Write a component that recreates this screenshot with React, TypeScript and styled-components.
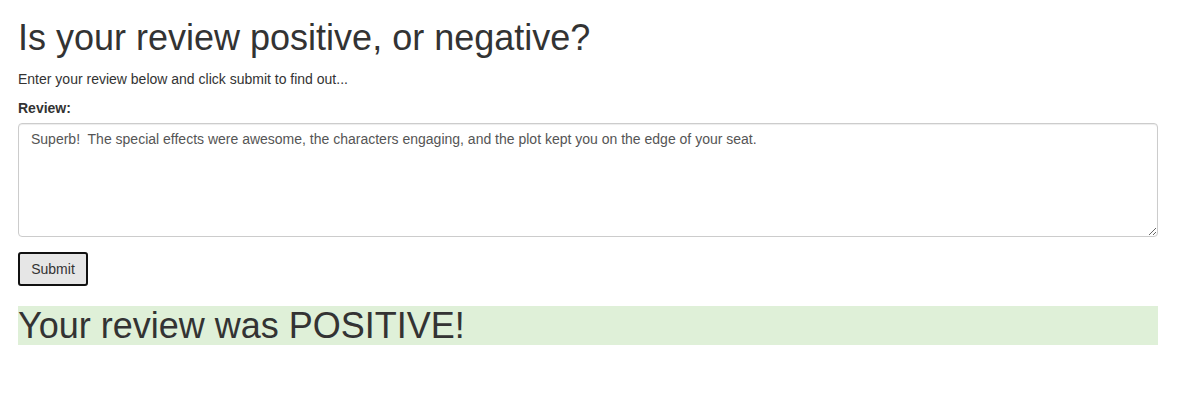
import React from "react";
import styled, { createGlobalStyle } from "styled-components";

const Global = createGlobalStyle`
  html, body { margin: 0; padding: 0; background: #fff; }
  body {
    font-family: "Liberation Sans", Arial, Helvetica, sans-serif;
    font-size: 14px;
    line-height: 1.42857;
    color: #333;
  }
  * { box-sizing: border-box; }
`;

const Container = styled.div`
  width: 1158px;
  padding-left: 18px;
  padding-top: 18px;
`;

const Title = styled.h1`
  margin: 0 0 12px;
  font-size: 36px;
  font-weight: 400;
  line-height: 1.1;
`;

const Lead = styled.p`
  margin: 0 0 9px;
  font-size: 14px;
`;

const FormGroup = styled.div`
  display: flex;
  flex-direction: column;
  margin-bottom: 15px;
`;

const Label = styled.label`
  font-weight: 700;
  margin-bottom: 4px;
`;

const TextArea = styled.textarea`
  width: 1140px;
  height: 114px;
  padding: 6px 12px;
  font-family: "Liberation Sans", Arial, sans-serif;
  font-size: 14px;
  line-height: 1.42857;
  color: #555;
  background: #fff;
  border: 1px solid #ccc;
  border-radius: 4px;
  box-shadow: inset 0 1px 1px rgba(0, 0, 0, 0.075);
  resize: vertical;
  outline: none;
`;

const Button = styled.button`
  display: block;
  width: 70px;
  height: 34px;
  padding: 0;
  font-family: "Liberation Sans", Arial, sans-serif;
  font-size: 14px;
  color: #333;
  background: #e6e6e6;
  border: 2px solid #111;
  border-radius: 3px;
  margin-bottom: 20px;
`;

const Result = styled.div<{ $ok: boolean }>`
  width: 1140px;
  background: ${(p) => (p.$ok ? "#dff0d8" : "#f2dede")};
  font-size: 36px;
  line-height: 39px;
  color: #333;
`;

export default function App() {
  return (
    <>
      <Global />
      <Container>
        <Title>Is your review positive, or negative?</Title>
        <Lead>Enter your review below and click submit to find out...</Lead>
        <FormGroup>
          <Label htmlFor="review">Review:</Label>
          <TextArea
            id="review"
            defaultValue="Superb!  The special effects were awesome, the characters engaging, and the plot kept you on the edge of your seat."
          />
        </FormGroup>
        <Button type="button">Submit</Button>
        <Result $ok={true}>Your review was POSITIVE!</Result>
      </Container>
    </>
  );
}
